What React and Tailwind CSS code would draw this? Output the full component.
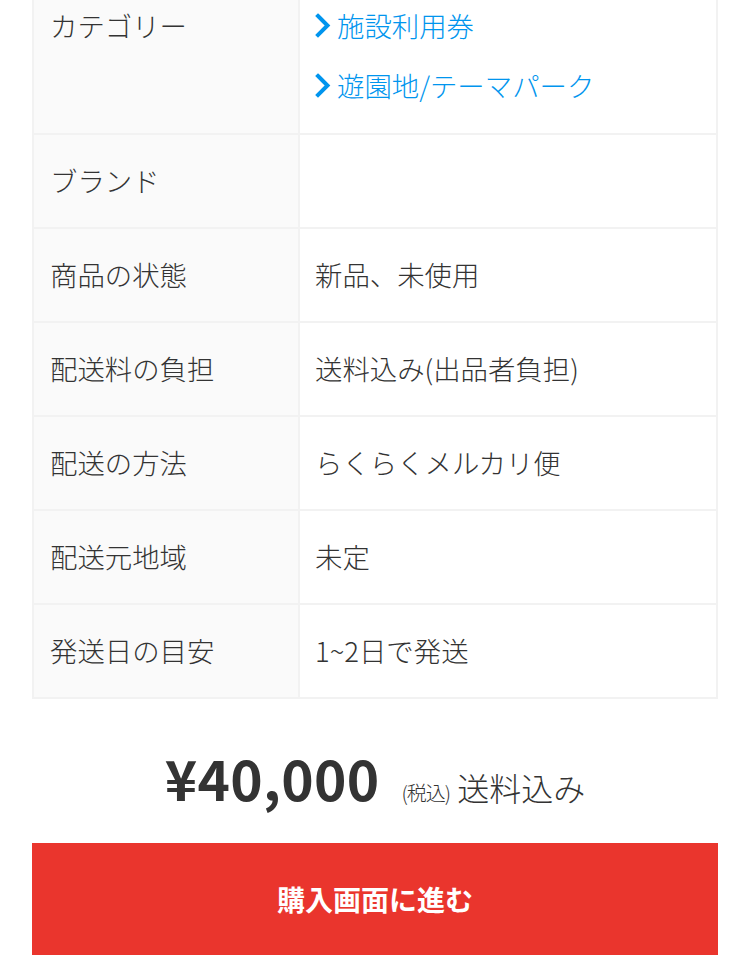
import React from 'react';

const font = { fontFamily: '"Noto Sans CJK JP", "Noto Sans", sans-serif' };

const rows = [
  { label: 'ブランド', value: '' },
  { label: '商品の状態', value: '新品、未使用' },
  { label: '配送料の負担', value: '送料込み(出品者負担)' },
  { label: '配送の方法', value: 'らくらくメルカリ便' },
  { label: '配送元地域', value: '未定' },
  { label: '発送日の目安', value: '1~2日で発送' },
];

const categories = ['施設利用券', '遊園地/テーマパーク'];

const Chevron = () => (
  <svg width="16" height="25" viewBox="0 0 16 25" className="shrink-0">
    <path d="M3 3 L12.5 12.5 L3 22" fill="none" stroke="#0095ee" strokeWidth="4" strokeLinecap="square" />
  </svg>
);

const Row = ({ label, children, first }) => (
  <div className="flex border-b-2 border-[#f2f2f2]">
    <div
      className={`w-[266px] shrink-0 bg-[#fafafa] border-r-2 border-[#f2f2f2] pl-[16px] ${
        first ? 'pt-[26px] pb-[29px]' : 'pt-[26px] pb-[28px]'
      }`}
    >
      {label}
    </div>
    <div className={`flex-1 pl-[15px] ${first ? 'pt-[26px] pb-[29px]' : 'pt-[26px] pb-[28px]'}`}>{children}</div>
  </div>
);

export default function App() {
  return (
    <div className="w-[752px] h-[964px] overflow-hidden bg-white text-[#333333] font-light" style={font}>
      <div className="ml-[32px] w-[686px] mt-[-20px]">
        <div className="border-x-2 border-[#f2f2f2] text-[27.4px] leading-[38px]">
          <Row label="カテゴリー" first>
            <div className="flex flex-col gap-[22px]">
              {categories.map((c) => (
                <div key={c} className="flex items-center gap-[6px] text-[#0095ee]">
                  <Chevron />
                  <span>{c}</span>
                </div>
              ))}
            </div>
          </Row>
          {rows.map((r) => (
            <Row key={r.label} label={r.label}>
              <span>{r.value}</span>
            </Row>
          ))}
        </div>

        <div className="flex items-baseline justify-center mt-[50px] mb-[32px]">
          <span className="text-[55px] leading-[56px] font-bold tracking-[0.3px]">¥40,000</span>
          <span className="ml-[22px] text-[20px] tracking-[-1px]">(税込)</span>
          <span className="ml-[7px] text-[32px]">送料込み</span>
        </div>

        <button className="w-full h-[112px] bg-[#ea352d] text-white text-[28px] font-bold flex items-center justify-center">
          購入画面に進む
        </button>
      </div>
    </div>
  );
}
